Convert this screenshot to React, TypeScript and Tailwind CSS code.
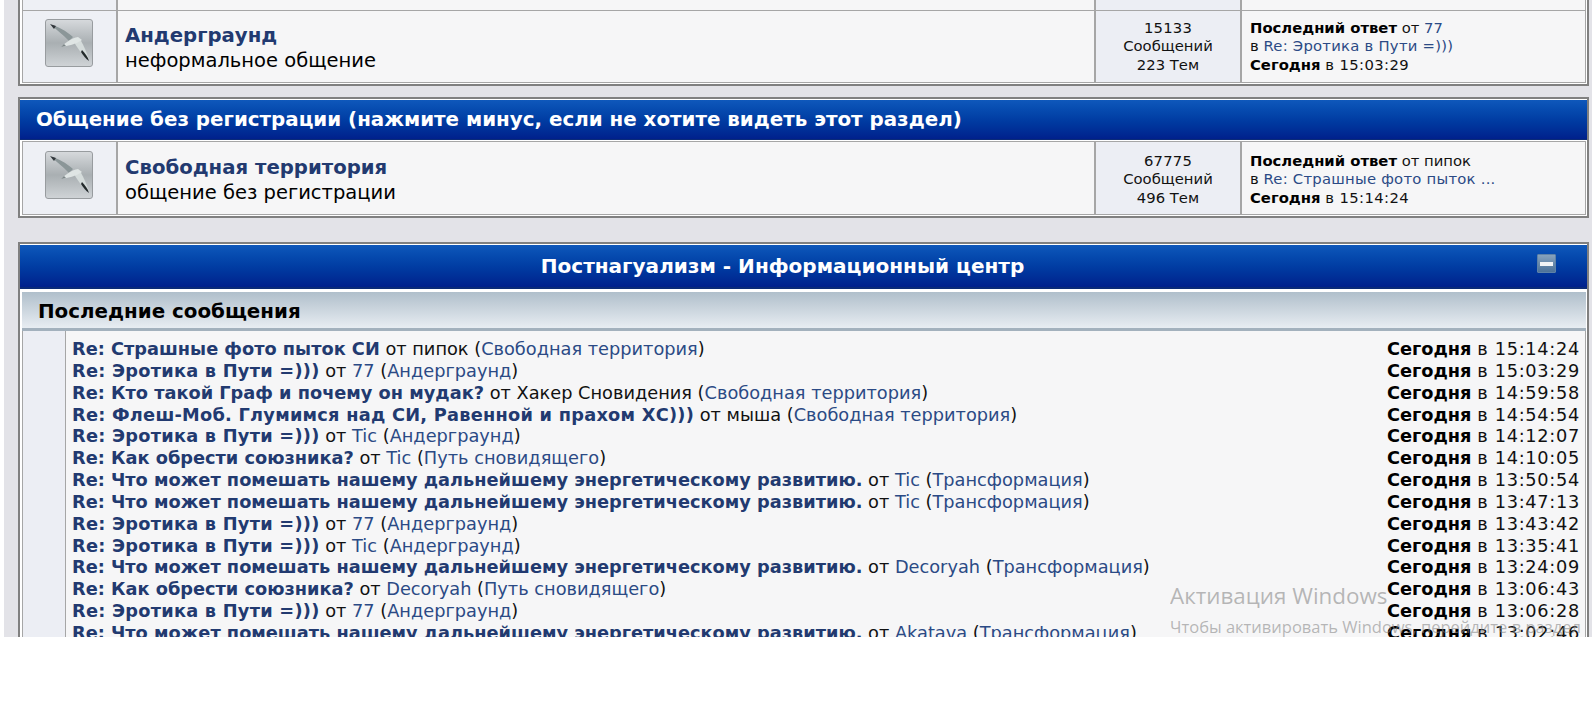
const posts = [
  { title: 'Re: Страшные фото пыток СИ', by: 'пипок', plain: true, forum: 'Свободная территория', time: '15:14:24' },
  { title: 'Re: Эротика в Пути =)))', wide: true, by: '77', forum: 'Андерграунд', time: '15:03:29' },
  { title: 'Re: Кто такой Граф и почему он мудак?', by: 'Хакер Сновидения', plain: true, forum: 'Свободная территория', time: '14:59:58' },
  { title: 'Re: Флеш-Моб. Глумимся над СИ, Равенной и прахом ХС)))', wide: true, by: 'мыша', plain: true, forum: 'Свободная территория', time: '14:54:54' },
  { title: 'Re: Эротика в Пути =)))', wide: true, by: 'Tic', forum: 'Андерграунд', time: '14:12:07' },
  { title: 'Re: Как обрести союзника?', by: 'Tic', forum: 'Путь сновидящего', time: '14:10:05' },
  { title: 'Re: Что может помешать нашему дальнейшему энергетическому развитию.', by: 'Tic', forum: 'Трансформация', time: '13:50:54' },
  { title: 'Re: Что может помешать нашему дальнейшему энергетическому развитию.', by: 'Tic', forum: 'Трансформация', time: '13:47:13' },
  { title: 'Re: Эротика в Пути =)))', wide: true, by: '77', forum: 'Андерграунд', time: '13:43:42' },
  { title: 'Re: Эротика в Пути =)))', wide: true, by: 'Tic', forum: 'Андерграунд', time: '13:35:41' },
  { title: 'Re: Что может помешать нашему дальнейшему энергетическому развитию.', by: 'Decoryah', forum: 'Трансформация', time: '13:24:09' },
  { title: 'Re: Как обрести союзника?', by: 'Decoryah', forum: 'Путь сновидящего', time: '13:06:43' },
  { title: 'Re: Эротика в Пути =)))', wide: true, by: '77', forum: 'Андерграунд', time: '13:06:28' },
  { title: 'Re: Что может помешать нашему дальнейшему энергетическому развитию.', by: 'Akatava', forum: 'Трансформация', time: '13:02:46' },
];

function BirdIcon() {
  return (
    <div className="w-[48px] h-[48px] rounded-[3px] border border-[#989c9f] bg-gradient-to-b from-[#d6d9dc] via-[#a9afb2] to-[#cfd3d6] overflow-hidden">
      <svg width="46" height="46" viewBox="0 0 46 46">
        <defs>
          <filter id="soft">
            <feGaussianBlur stdDeviation="0.6" />
          </filter>
        </defs>
        <g filter="url(#soft)">
          <path d="M5 5 C12 6 20 11 27 17 L23 21 C16 14 10 9 5 5 Z" fill="#8b9698" />
          <path d="M4 4 L10 6 L8 9 Z" fill="#30363a" />
          <path d="M27 20 L34 19 C38 26 41 33 43 40 C37 36 31 28 27 20 Z" fill="#d5dcdb" />
          <path d="M15 27 C20 22 26 18 32 17 L36 20 C30 24 22 26 15 27 Z" fill="#dfe5e4" />
          <path d="M36 30 C39 33 42 37 43 41 C40 39 37 35 35 32 Z" fill="#24292c" />
          <path d="M15 27 L18 24 L20 26 Z" fill="#7c8587" />
        </g>
      </svg>
    </div>
  );
}

function ForumRow({ first, name, desc, stats, topics, by, byLink, topic, time }: { first?: boolean; name: string; desc: string; stats: string; topics: string; by: string; byLink?: boolean; topic: string; time: string }) {
  return (
    <div className={`ml-[2px] mr-[1px] mb-[1px] border border-[#a6a6a6] flex bg-[#f6f6f7] ${first ? 'border-t-0 h-[72px]' : 'h-[74px]'}`}>
      <div className={`w-[95px] shrink-0 bg-[#eef0f5] border-r-2 border-[#a6a6a6] flex items-start justify-center pr-[1px] ${first ? 'pt-[8px]' : 'pt-[9px]'}`}>
        <BirdIcon />
      </div>
      <div className={`flex-1 pl-[7px] ${first ? 'pt-[12px]' : 'pt-[13px]'}`}>
        <div className="text-[19.7px] leading-[25px] font-bold text-[#223a70]">{name}</div>
        <div className="text-[19.5px] leading-[25px] text-black">{desc}</div>
      </div>
      <div className={`w-[148px] shrink-0 bg-[#eceef4] border-x-2 border-[#a6a6a6] text-center text-[14.8px] leading-[18.4px] text-[#111] ${first ? 'pt-[8px]' : 'pt-[10px]'}`}>
        <div className="tracking-[0.2px]">{stats}</div>
        <div>Сообщений</div>
        <div>{topics}</div>
      </div>
      <div className={`w-[343px] shrink-0 pl-[8px] text-[14.8px] leading-[18.4px] text-[#111] whitespace-nowrap ${first ? 'pt-[8px]' : 'pt-[10px]'}`}>
        <div><b className="text-black">Последний ответ</b> от {byLink ? <span className="text-[#2b4a85]">{by}</span> : by}</div>
        <div>в <span className="text-[#2b4a85] tracking-[0.25px]">{topic}</span></div>
        <div><b className="text-black">Сегодня</b> <span className="tracking-[0.4px]">в {time}</span></div>
      </div>
    </div>
  );
}

export default function App() {
  return (
    <div className="h-[702px] bg-white font-['DejaVu_Sans',sans-serif]">
      <div className="relative ml-[4px] h-[637px] overflow-hidden bg-[#e3e3e8] pl-[14px] pr-[3px]">
        {/* first panel is cut off by the top of the window */}
        <div className="border-2 border-t-0 border-[#808080] bg-white">
          <div className="ml-[2px] mr-[1px] flex h-[11px] overflow-hidden border-x border-b border-[#a6a6a6] bg-[#f6f6f7]">
            <div className="w-[95px] shrink-0 bg-[#eef0f5] border-r-2 border-[#a6a6a6]" />
            <div className="flex-1" />
            <div className="w-[148px] shrink-0 bg-[#eceef4] border-x-2 border-[#a6a6a6]" />
            <div className="w-[343px] shrink-0 pl-[8px]">
              <div className="-mt-[16px] text-[14.8px] leading-[18.4px] font-bold text-black">Сегодня</div>
            </div>
          </div>
          <ForumRow first name="Андерграунд" desc="неформальное общение" stats="15133" topics="223 Тем" by="77" byLink topic="Re: Эротика в Пути =)))" time="15:03:29" />
        </div>

        <div className="mt-[11px] border-2 border-[#808080] bg-white">
          <div className="h-[40px] mt-[1px] border-b border-[#0a2a78] bg-gradient-to-b from-[#0f58bb] to-[#00208c] pl-[16px] pt-[1px] flex items-center text-[19.85px] font-bold text-white whitespace-nowrap">
            Общение без регистрации (нажмите минус, если не хотите видеть этот раздел)
          </div>
          <div className="h-[1px]" />
          <ForumRow name="Свободная территория" desc="общение без регистрации" stats="67775" topics="496 Тем" by="пипок" topic="Re: Страшные фото пыток ..." time="15:14:24" />
        </div>

        <div className="mt-[24px] border-2 border-[#808080] bg-white">
          <div className="h-[44px] mt-[1px] border-b-2 border-[#0a2a78] bg-gradient-to-b from-[#0f58bb] to-[#00208c] flex items-center text-[20.05px] font-bold text-white">
            <div className="flex-1 pl-[8px] text-center">Постнагуализм - Информационный центр</div>
            <div className="mr-[31px] mb-[5px] w-[19px] h-[19px] rounded-[1px] border border-[#5e82a8] bg-gradient-to-b from-[#86a2bd] to-[#4c7299] flex items-center justify-center">
              <div className="w-[13px] h-[4px] bg-[#f2f4f6]" />
            </div>
          </div>
          <div className="ml-[2px] mr-[1px] mt-[3px]">
            <div className="h-[39px] border-b-[3px] border-[#a3b1bd] bg-gradient-to-b from-[#b0bfcb] to-[#e8edf2] pl-[16px] pt-[3px] flex items-center text-[19.85px] font-bold text-black">
              Последние сообщения
            </div>
            <div className="flex border-x border-[#a6a6a6] bg-[#f6f6f7]">
              <div className="w-[43px] shrink-0 bg-[#eceef4] border-r border-[#a6a6a6]" />
              <div className="flex-1 pt-[8px] pl-[6px] pr-[5px] text-[17.75px] leading-[21.85px] text-[#111]">
                {posts.map((p, i) => (
                  <div key={i} className="flex justify-between whitespace-nowrap">
                    <div>
                      <b className={`text-[#223a70] ${p.wide ? 'tracking-[0.25px]' : ''}`}>{p.title}</b> от{' '}
                      {p.plain ? p.by : <span className="text-[#2b4a85]">{p.by}</span>} (<span className="text-[#2b4a85]">{p.forum}</span>)
                    </div>
                    <div><b className="text-black">Сегодня</b> <span className="tracking-[0.7px]">в {p.time}</span></div>
                  </div>
                ))}
              </div>
            </div>
          </div>
        </div>

        {/* windows activation watermark */}
        <div className="absolute left-[1166px] top-[580px] w-[422px] overflow-hidden whitespace-nowrap font-['Open_Sans',sans-serif] text-[#8a8a8a]/60">
          <div className="text-[22.4px] leading-[32px]">Активация Windows</div>
          <div className="text-[16.5px] leading-[24px] mt-[3px]">Чтобы активировать Windows, перейдите в раздел</div>
        </div>
      </div>
    </div>
  );
}
